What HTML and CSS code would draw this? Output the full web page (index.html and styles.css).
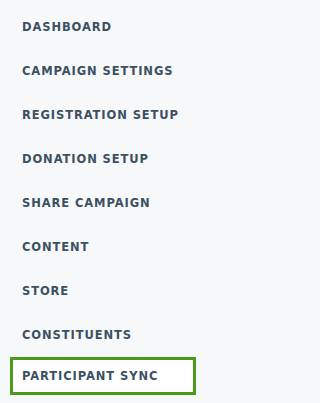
FILE: index.html
```html
<!DOCTYPE html>
<html>
<head>
<meta charset="utf-8">
<link rel="stylesheet" href="styles.css">
</head>
<body>
<nav class="sidenav">
  <a class="nav-item" href="#">DASHBOARD</a>
  <a class="nav-item" href="#">CAMPAIGN SETTINGS</a>
  <a class="nav-item" href="#">REGISTRATION SETUP</a>
  <a class="nav-item" href="#">DONATION SETUP</a>
  <a class="nav-item" href="#">SHARE CAMPAIGN</a>
  <a class="nav-item" href="#">CONTENT</a>
  <a class="nav-item" href="#">STORE</a>
  <a class="nav-item" href="#">CONSTITUENTS</a>
  <a class="nav-item nav-item--active" href="#">PARTICIPANT SYNC</a>
</nav>
</body>
</html>
```
FILE: styles.css
```css
html, body {
  margin: 0;
  padding: 0;
  background: #f7f8fa;
}
.sidenav {
  display: flex;
  flex-direction: column;
  padding-top: 5px;
  width: 205px;
}
.nav-item {
  display: block;
  height: 44px;
  line-height: 44px;
  padding: 0 0 0 22px;
  font-family: "DejaVu Sans", Verdana, sans-serif;
  font-weight: 700;
  font-size: 11.5px;
  letter-spacing: 0.9px;
  color: #3b5163;
  text-decoration: none;
  white-space: nowrap;
}
.nav-item--active {
  height: 32px;
  line-height: 33px;
  margin: 0 9px 0 10px;
  padding-left: 9px;
  border: 3px solid #4a9a1c;
  background: #ffffff;
}
```
